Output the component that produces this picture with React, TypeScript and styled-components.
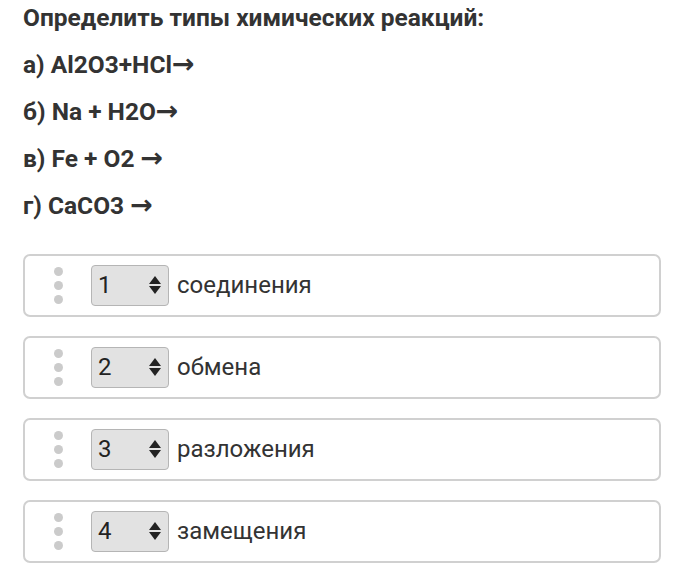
import React from "react";
import styled, { createGlobalStyle } from "styled-components";

const Global = createGlobalStyle`
  html, body { margin: 0; padding: 0; background: #fff; }
  body { font-family: Roboto, "Noto Sans", sans-serif; color: #333; }
`;

const Page = styled.div`
  width: 682px;
  height: 572px;
  box-sizing: border-box;
  padding: 3px 21px 0 23px;
  display: flex;
  flex-direction: column;
`;

const Title = styled.div`
  font-weight: 700;
  font-size: 24.5px;
  line-height: 30px;
  color: #333;
`;

const Line = styled.div`
  font-weight: 700;
  font-size: 24.5px;
  line-height: 30px;
  margin-top: 16.9px;
  color: #333;
`;

const Arrow = styled.span`
  font-family: "DejaVu Sans", sans-serif;
  font-weight: 700;
  font-size: 27px;
  line-height: 0;
`;

const List = styled.div`
  display: flex;
  flex-direction: column;
  gap: 19px;
  margin-top: 33px;
`;

const Card = styled.div`
  height: 63px;
  box-sizing: border-box;
  border: 2px solid #d0d0d0;
  border-radius: 7px;
  display: flex;
  align-items: center;
  padding-left: 29px;
`;

const Dots = styled.div`
  display: flex;
  flex-direction: column;
  gap: 5px;
  width: 9px;
  margin-right: 28px;
`;

const Dot = styled.span`
  width: 9px;
  height: 9px;
  border-radius: 50%;
  background: #cbcbcb;
`;

const Select = styled.div`
  width: 78px;
  height: 41px;
  box-sizing: border-box;
  border: 1px solid #b5b5b5;
  border-radius: 4px;
  background: #e2e2e2;
  display: flex;
  align-items: center;
  justify-content: space-between;
  padding: 0 7px 0 6px;
  font-size: 24px;
  color: #222;
  margin-right: 8px;
`;

const Label = styled.span`
  font-size: 24px;
  color: #333;
`;

const Arrows = () => (
  <svg width="12" height="18" viewBox="0 0 12 18">
    <path d="M6 0 L12 8 L0 8 Z" fill="#222" />
    <path d="M0 10 L12 10 L6 18 Z" fill="#222" />
  </svg>
);

const items = [
  ["1", "соединения"],
  ["2", "обмена"],
  ["3", "разложения"],
  ["4", "замещения"],
];

const lines = ["а) Al2O3+HCl", "б) Na + H2O", "в) Fe + O2 ", "г) CaCO3 "];

export default function App() {
  return (
    <>
      <Global />
      <Page>
        <Title>Определить типы химических реакций:</Title>
        {lines.map((l) => (
          <Line key={l}>
            {l}
            <Arrow>→</Arrow>
          </Line>
        ))}
        <List>
          {items.map(([n, t]) => (
            <Card key={n}>
              <Dots>
                <Dot />
                <Dot />
                <Dot />
              </Dots>
              <Select>
                <span>{n}</span>
                <Arrows />
              </Select>
              <Label>{t}</Label>
            </Card>
          ))}
        </List>
      </Page>
    </>
  );
}
